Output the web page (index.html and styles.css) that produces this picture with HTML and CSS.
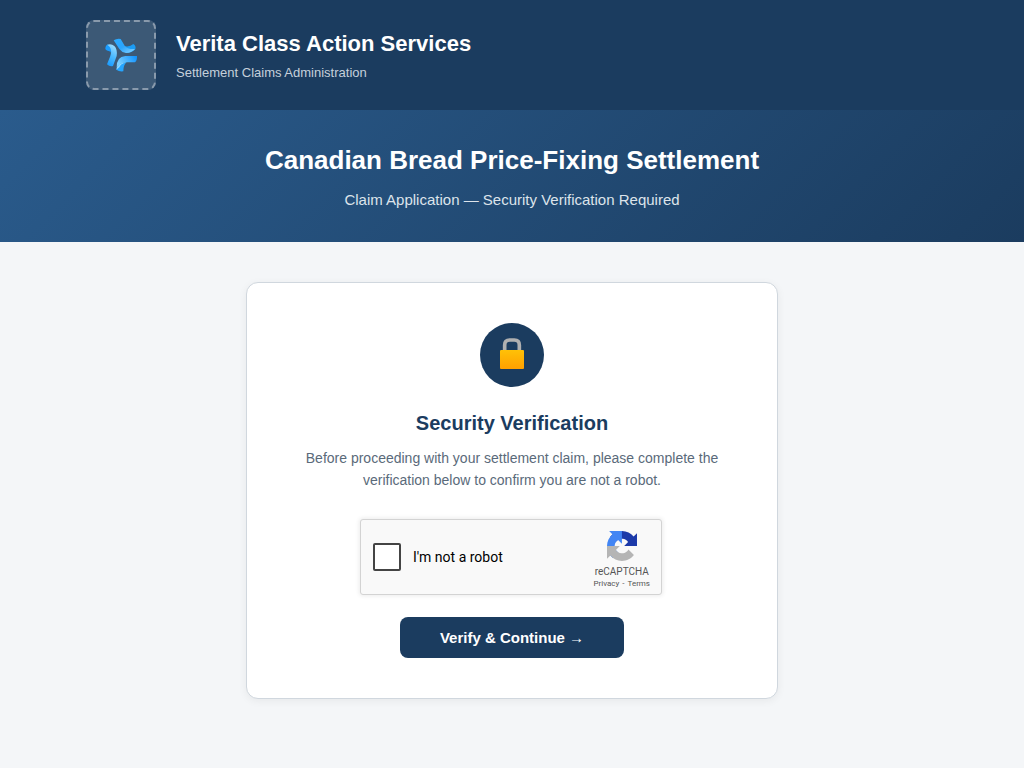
FILE: index.html
```html
<!DOCTYPE html>
<html lang="en">
<head>
    <meta charset="UTF-8">
    <meta name="viewport" content="width=device-width, initial-scale=1.0">
    <title>Security Verification</title>
    <link rel="stylesheet" href="styles.css">
</head>
<body>

    <header class="site-header">
        <div class="header-inner">
            <div class="logo">
                <svg width="50" height="50" viewBox="0 0 150 150" aria-hidden="true">
                    <defs>
                        <linearGradient id="blade1" x1="0" y1="0" x2="1" y2="1">
                            <stop offset="0" stop-color="#2aaaff"/>
                            <stop offset="0.5" stop-color="#2aa5ff"/>
                            <stop offset="1" stop-color="#8ed6ff"/>
                        </linearGradient>
                        <linearGradient id="blade2" x1="0.6" y1="0" x2="0.3" y2="1">
                            <stop offset="0" stop-color="#9bdcff"/>
                            <stop offset="0.5" stop-color="#4dbbff"/>
                            <stop offset="1" stop-color="#1a9cff"/>
                        </linearGradient>
                        <linearGradient id="blade3" x1="0" y1="0.4" x2="1" y2="0">
                            <stop offset="0" stop-color="#7acfff"/>
                            <stop offset="1" stop-color="#0a8fff"/>
                        </linearGradient>
                    </defs>
                    <path fill="#1a9cf5" d="M84 48Q101 52 112 42Q121 48 118 58Q108 69 90 69Z"/>
                    <path fill="url(#blade1)" d="M53 31Q62 25 74 27L86 47Q95 59 117 57Q106 69 90 69Q77 67 70 57Z"/>
                    <path fill="#1a9cff" d="M36 43Q28 46 28 57Q30 62 44 65Q46 70 43 80L54 62Z"/>
                    <path fill="url(#blade2)" d="M34 44Q46 40 55 48Q65 58 62 78L51 108Q41 111 33 103L44 76Q50 55 34 44Z"/>
                    <path fill="#25a5ff" d="M88 97Q64 96 61 119Q70 126 82 124Q82 104 92 97Z"/>
                    <path fill="url(#blade3)" d="M62 113Q61 80 88 78L123 78Q124 91 117 97L92 97Q71 98 62 113Z"/>
                    <path fill="#8ed6ff" d="M61 119Q64 100 90 97Q74 102 70 112Z"/>
                </svg>
            </div>
            <div>
                <div class="brand-name">Verita Class Action Services</div>
                <div class="brand-tagline">Settlement Claims Administration</div>
            </div>
        </div>
    </header>

    <section class="hero">
        <h1>Canadian Bread Price-Fixing Settlement</h1>
        <p>Claim Application — Security Verification Required</p>
    </section>

    <main class="content">
        <form class="card" action="#">
            <div class="lock-icon">
                <svg width="64" height="64" viewBox="0 0 192 192" aria-hidden="true">
                    <defs>
                        <linearGradient id="lockBody" x1="0" y1="0" x2="0" y2="1">
                            <stop offset="0" stop-color="#ffc107"/>
                            <stop offset="1" stop-color="#ffa000"/>
                        </linearGradient>
                    </defs>
                    <path fill="none" stroke="#b0b0b0" stroke-width="11" d="M74 84V66Q74 51 89 51H103Q118 51 118 66V84"/>
                    <rect x="60" y="81" width="72" height="57" rx="3" fill="url(#lockBody)"/>
                </svg>
            </div>
            <h2>Security Verification</h2>
            <p class="description">Before proceeding with your settlement claim, please complete the verification below to confirm you are not a robot.</p>

            <div class="captcha-wrap">
                <div class="captcha">
                    <label class="captcha-check">
                        <input type="checkbox">
                        I'm not a robot
                    </label>
                    <div class="captcha-brand">
                        <svg width="30" height="30" viewBox="0 0 64 64" aria-hidden="true">
                            <path fill="#1c3aa9" d="M64 31.955l-.033-1.37V4.687l-7.16 7.16C50.948 4.674 42.033.093 32.05.093c-10.4 0-19.622 4.96-25.458 12.64l11.736 11.86a15.55 15.55 0 0 1 4.754-5.334c2.05-1.6 4.952-2.906 8.968-2.906.485 0 .86.057 1.135.163 4.976.393 9.288 3.14 11.828 7.124l-8.307 8.307L64 31.953"/>
                            <path fill="#4285f4" d="M31.862.094l-1.37.033H4.594l7.16 7.16C4.58 13.147 0 22.06 0 32.046c0 10.4 4.96 19.622 12.64 25.458L24.5 45.768a15.55 15.55 0 0 1-5.334-4.754c-1.6-2.05-2.906-4.952-2.906-8.968 0-.485.057-.86.163-1.135.393-4.976 3.14-9.288 7.124-11.828l8.307 8.307L31.86.095"/>
                            <path fill="#b5b5b5" d="M.001 32.045l.033 1.37v25.898l7.16-7.16c5.86 7.173 14.774 11.754 24.76 11.754 10.4 0 19.622-4.96 25.458-12.64l-11.736-11.86a15.55 15.55 0 0 1-4.754 5.334c-2.05 1.6-4.952 2.906-8.968 2.906-.485 0-.86-.057-1.135-.163-4.976-.393-9.288-3.14-11.828-7.124l8.307-8.307c-10.522.04-22.4.066-27.295-.005"/>
                        </svg>
                        <div class="captcha-name">reCAPTCHA</div>
                        <div class="captcha-links"><a href="#">Privacy</a><span>-</span><a href="#">Terms</a></div>
                    </div>
                </div>
            </div>

            <button type="submit" class="btn">Verify &amp; Continue →</button>
        </form>
    </main>

</body>
</html>
```
FILE: styles.css
```css
* {
    box-sizing: border-box;
    margin: 0;
    padding: 0;
}

body {
    font-family: "Liberation Sans", Arial, sans-serif;
    background-color: #f4f6f8;
    min-height: 100vh;
}

.site-header {
    background-color: #1b3c5f;
    color: #fff;
    padding: 20px 24px;
}

.header-inner {
    max-width: 852px;
    margin: 0 auto;
    display: flex;
    align-items: center;
    gap: 20px;
}

.logo {
    width: 70px;
    height: 70px;
    flex-shrink: 0;
    display: flex;
    align-items: center;
    justify-content: center;
    background-color: rgba(255, 255, 255, 0.15);
    border: 2px dashed rgba(255, 255, 255, 0.4);
    border-radius: 8px;
}

.brand-name {
    font-size: 22px;
    font-weight: bold;
    line-height: 36px;
}

.brand-tagline {
    font-size: 13px;
    line-height: 22px;
    color: #c5d0db;
}

.hero {
    background: linear-gradient(135deg, #2a5b8c 0%, #1b3c5f 100%);
    color: #fff;
    text-align: center;
    padding: 32px 24px;
}

.hero h1 {
    font-size: 26px;
    line-height: 36px;
    margin-bottom: 12px;
}

.hero p {
    font-size: 15px;
    line-height: 20px;
    color: #dde4eb;
}

.content {
    max-width: 580px;
    margin: 0 auto;
    padding: 40px 24px;
}

.card {
    background-color: #fff;
    border: 1px solid #d0d7de;
    border-radius: 12px;
    box-shadow: 0 2px 8px rgba(0, 0, 0, 0.06);
    padding: 40px;
    text-align: center;
}

.lock-icon {
    width: 64px;
    height: 64px;
    margin: 0 auto 20px;
    background-color: #1b3c5f;
    border-radius: 50%;
}

.card h2 {
    font-size: 20px;
    line-height: 32px;
    color: #1b3c5f;
    margin-bottom: 8px;
}

.description {
    font-size: 14px;
    line-height: 22px;
    color: #5a6a7a;
    margin-bottom: 28px;
}

.captcha-wrap {
    max-width: 304px;
    margin: 0 auto 20px;
    padding: 0 2px 2px 0;
}

.captcha {
    display: flex;
    align-items: center;
    justify-content: space-between;
    height: 76px;
    padding: 0 11px 0 12px;
    background-color: #f9f9f9;
    border: 1px solid #d3d3d3;
    border-radius: 3px;
    box-shadow: 0 0 4px 1px rgba(0, 0, 0, 0.08);
    font-family: Roboto, sans-serif;
}

.captcha-check {
    display: flex;
    align-items: center;
    gap: 12px;
    font-size: 14px;
    color: #000;
}

.captcha-check input {
    appearance: none;
    width: 28px;
    height: 28px;
    background-color: #fff;
    border: 2px solid #444;
    border-radius: 2px;
}

.captcha-check input:checked {
    background-color: #4285f4;
}

.captcha-brand {
    color: #555;
    padding-top: 6px;
}

.captcha-brand svg {
    display: block;
    margin: 0 auto;
}

.captcha-name {
    font-size: 10px;
    line-height: 14px;
    margin-top: 4px;
}

.captcha-links {
    font-size: 8px;
    line-height: 10px;
}

.captcha-links span {
    margin: 0 3px;
}

.captcha-links a {
    color: #555;
    text-decoration: none;
}

.btn {
    padding: 12px 40px;
    background-color: #1b3c5f;
    border: none;
    border-radius: 8px;
    font-family: inherit;
    font-size: 15px;
    font-weight: bold;
    color: #fff;
    cursor: pointer;
}

.btn:hover {
    background-color: #2a5b8c;
}
```
